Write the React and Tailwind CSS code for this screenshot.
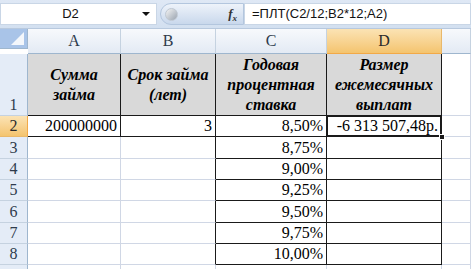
import React from "react";

const serif = "font-[family-name:'Liberation_Serif']";
const sans = "font-[family-name:'Liberation_Sans']";

const cols = ["A", "B", "C", "D"];
const rowHeights = ["h-[62px]", "h-[21px]", "h-[22px]", "h-[21px]", "h-[21px]", "h-[22px]", "h-[21px]", "h-[21px]", "h-[9px]"];
const rates = [null, "8,50%", "8,75%", "9,00%", "9,25%", "9,50%", "9,75%", "10,00%", null];

const HeaderCell = ({ label, active }) => (
  <div
    className={
      serif +
      " flex items-center justify-center border-r border-b text-[16px] " +
      (active
        ? "bg-gradient-to-b from-[#fbe3b4] to-[#f4c46e] border-b-[#f2a947] border-r-[#e9b86a] text-[#2b2b2b]"
        : "bg-gradient-to-b from-[#f7f9fc] to-[#e3eaf4] border-b-[#9eb6ce] border-r-[#c5d2e0] text-[#2e3b4c]")
    }
  >
    {label}
  </div>
);

const RowHead = ({ n, active, h, last }) => (
  <div
    className={
      serif +
      " flex justify-center overflow-hidden border-r border-b text-[16px] leading-[20px] " +
      (last ? "items-start " : "items-end ") +
      h +
      (active
        ? " bg-gradient-to-b from-[#fbe3b4] to-[#f4c46e] border-r-[#f2a947] border-b-[#e9b86a] text-[#2b2b2b]"
        : " bg-[#e4ecf7] border-r-[#9eb6ce] border-b-[#c5d2e0] text-[#2e3b4c]")
    }
  >
    {n}
  </div>
);

export default function App() {
  const cell = (r, c) => {
    // r: номер строки, c: 0..3 для A..D, 4 для E
    const inTableAB = r <= 2 && c <= 1;
    const inTableCD = r <= 8 && (c === 2 || c === 3);
    let cls = serif + " border-r border-b border-[#d0d7e5] px-[3px] text-[16px] text-black ";
    if (inTableAB || inTableCD) cls += "border-b-[#1a1a1a] border-r-[#1a1a1a] ";
    if (c === 1 && r <= 8) cls += "border-r-[#1a1a1a] ";
    if (r === 1 && c <= 3) cls += "bg-[#d9d9d9] ";

    let content = null;
    if (r === 1 && c <= 3) {
      const labels = [
        ["Сумма", "займа"],
        ["Срок займа", "(лет)"],
        ["Годовая", "процентная", "ставка"],
        ["Размер", "ежемесячных", "выплат"],
      ];
      cls += "flex flex-col items-center justify-center font-bold italic text-[16px] leading-[20px] text-center ";
      content = labels[c].map((l) => <span key={l}>{l}</span>);
    } else if (r === 2 && c === 0) {
      cls += "flex items-end justify-end leading-[20px] ";
      content = "200000000";
    } else if (r === 2 && c === 1) {
      cls += "flex items-end justify-end leading-[20px] ";
      content = "3";
    } else if (c === 2 && rates[r - 1]) {
      cls += "flex items-end justify-end leading-[20px] ";
      content = rates[r - 1];
    } else if (r === 2 && c === 3) {
      cls += "relative flex items-end justify-end leading-[20px] whitespace-nowrap ";
      content = (
        <>
          <span className="pointer-events-none absolute -left-[1px] -top-[1px] -right-[1px] -bottom-[1px] border-2 border-[#1a1a1a]" />
          <span>-6 313 507,48р.</span>
          <span className="absolute -right-[4px] -bottom-[4px] h-[6px] w-[6px] border border-white bg-[#1a1a1a]" />
        </>
      );
    }
    return (
      <div key={`${r}-${c}`} className={cls + rowHeights[r - 1]}>
        {content}
      </div>
    );
  };

  return (
    <div className="h-[269px] w-[471px] overflow-hidden bg-white">
      <div className="flex h-[29px] items-start bg-gradient-to-b from-[#dfe8f5] to-[#d3e0f0] border-b border-[#b8c9de] pt-[3px]">
        <div className={sans + " relative flex h-[22px] w-[157px] items-center justify-center border border-[#c9d6e6] bg-white text-[13px] text-[#111]"}>
          <span className="-ml-[16px]">D2</span>
          <span className="absolute right-[6px] top-[8px] h-0 w-0 border-x-[4px] border-t-[4px] border-x-transparent border-t-[#111]" />
        </div>
        <div className="ml-[3px] flex h-[22px] w-[84px] items-center justify-between rounded-l-full border border-[#b3c6de] bg-gradient-to-b from-[#eef3fa] to-[#c9d8ec] pl-[4px] pr-[6px]">
          <span className="h-[13px] w-[13px] rounded-full bg-gradient-to-br from-[#f5f5f5] to-[#9aa4b0] border border-[#c0c8d2]" />
          <span className={serif + " text-[13px] font-bold italic text-[#333]"}>
            f<sub className="text-[9px]">x</sub>
          </span>
        </div>
        <div className={sans + " flex h-[22px] flex-1 items-center border border-[#c9d6e6] bg-white pl-[7px] text-[13px] text-[#111]"}>
          =ПЛТ(C2/12;B2*12;A2)
        </div>
      </div>
      <div className="grid grid-cols-[28px_93px_95px_111px_115px_1fr]">
        <div className="relative h-[20px] border-r border-b border-r-[#9eb6ce] border-b-[#9eb6ce] bg-[#a9c4e8]">
          <span className="absolute bottom-[3px] right-[3px] h-0 w-0 border-b-[13px] border-l-[13px] border-b-[#f4f7fb] border-l-transparent" />
        </div>
        {cols.map((c) => (
          <HeaderCell key={c} label={c} active={c === "D"} />
        ))}
        <HeaderCell label="" />
        {rowHeights.map((h, i) => {
          const r = i + 1;
          return (
            <React.Fragment key={r}>
              <RowHead n={r} active={r === 2} h={h} last={r === 9} />
              {[0, 1, 2, 3, 4].map((c) => cell(r, c))}
            </React.Fragment>
          );
        })}
      </div>
    </div>
  );
}
